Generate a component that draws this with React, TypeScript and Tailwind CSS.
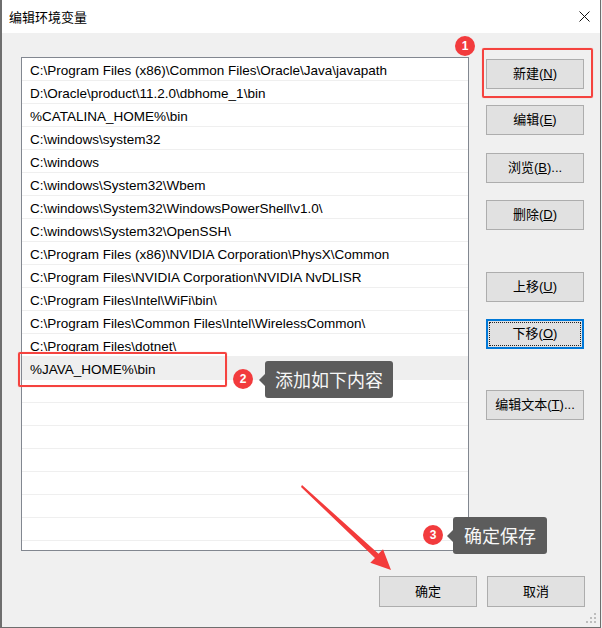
import React from "react";

const rows = [
  "C:\\Program Files (x86)\\Common Files\\Oracle\\Java\\javapath",
  "D:\\Oracle\\product\\11.2.0\\dbhome_1\\bin",
  "%CATALINA_HOME%\\bin",
  "C:\\windows\\system32",
  "C:\\windows",
  "C:\\windows\\System32\\Wbem",
  "C:\\windows\\System32\\WindowsPowerShell\\v1.0\\",
  "C:\\windows\\System32\\OpenSSH\\",
  "C:\\Program Files (x86)\\NVIDIA Corporation\\PhysX\\Common",
  "C:\\Program Files\\NVIDIA Corporation\\NVIDIA NvDLISR",
  "C:\\Program Files\\Intel\\WiFi\\bin\\",
  "C:\\Program Files\\Common Files\\Intel\\WirelessCommon\\",
  "C:\\Program Files\\dotnet\\",
  "%JAVA_HOME%\\bin",
  "",
  "",
  "",
  "",
  "",
  "",
  "",
  "",
];

function Btn({
  label,
  m,
  after = "",
  className = "",
  focused = false,
}: {
  label: string;
  m: string;
  after?: string;
  className?: string;
  focused?: boolean;
}) {
  return (
    <div
      className={`relative w-[98px] h-[30px] flex items-center justify-center bg-[#e1e1e1] text-[13px] text-black ${
        focused ? "border-2 border-[#0078d7]" : "border border-[#adadad]"
      } ${className}`}
    >
      {focused && (
        <div className="absolute inset-[1px] border border-dotted border-[#222]" />
      )}
      <span>
        {label}(<span className="underline">{m}</span>){after}
      </span>
    </div>
  );
}

function Badge({ n, left, top }: { n: string; left: string; top: string }) {
  return (
    <div
      className={`absolute ${left} ${top} w-[20px] h-[20px] rounded-full bg-[#f23b3d] text-white text-[12px] font-bold flex items-center justify-center leading-none`}
    >
      {n}
    </div>
  );
}

export default function App() {
  return (
    <div className="relative w-[602px] h-[628px] bg-[#f0f0f0] overflow-hidden font-['Liberation_Sans','Noto_Sans_CJK_SC',sans-serif]">
      <div className="w-[601px] h-[628px] border-l-2 border-r border-b border-[#6e6e6e] flex flex-col">
        {/* Title bar */}
        <div className="h-[33px] bg-white flex items-center justify-between pl-[7px] pr-[10px]">
          <span className="text-[13px] text-black font-['Noto_Sans_CJK_SC',sans-serif]">
            编辑环境变量
          </span>
          <svg width="11" height="11" viewBox="0 0 11 11">
            <path d="M0.5 0.5 L10.5 10.5 M10.5 0.5 L0.5 10.5" stroke="#111" strokeWidth="1" />
          </svg>
        </div>
        {/* Body */}
        <div className="flex-1 bg-[#f0f0f0] flex flex-col">
          <div className="flex items-start">
            <div className="ml-[19px] mt-[24px] w-[448px] h-[494px] border border-[#828790] bg-white overflow-hidden">
              {rows.map((r, i) => (
                <div
                  key={i}
                  className={`h-[23px] border-b border-[#efefef] pl-[8px] pt-[2px] text-[13.5px] leading-[22px] text-black whitespace-nowrap ${
                    i === 13 ? "bg-[#efefef]" : ""
                  }`}
                >
                  {r}
                </div>
              ))}
            </div>
            <div className="ml-[17px] mt-[26px] flex flex-col">
              <Btn label="新建" m="N" />
              <Btn label="编辑" m="E" className="mt-[16px]" />
              <Btn label="浏览" m="B" after="..." className="mt-[18px]" />
              <Btn label="删除" m="D" className="mt-[17px]" />
              <Btn label="上移" m="U" className="mt-[42px]" />
              <Btn label="下移" m="O" className="mt-[17px]" focused />
              <Btn label="编辑文本" m="T" after="..." className="mt-[41px]" />
            </div>
          </div>
          <div className="mt-[25px] flex justify-end gap-[10px] pr-[15px]">
            <div className="w-[98px] h-[31px] flex items-center justify-center bg-[#e1e1e1] border border-[#adadad] text-[13px] text-black">
              确定
            </div>
            <div className="w-[98px] h-[31px] flex items-center justify-center bg-[#e1e1e1] border border-[#adadad] text-[13px] text-black">
              取消
            </div>
          </div>
        </div>
      </div>

      {/* resize grip */}
      <svg className="absolute left-[586px] top-[613px]" width="12" height="12" viewBox="0 0 12 12">
        <rect x="8" y="0" width="2" height="2" fill="#bdbdbd" />
        <rect x="4" y="4" width="2" height="2" fill="#bdbdbd" />
        <rect x="8" y="4" width="2" height="2" fill="#bdbdbd" />
        <rect x="0" y="8" width="2" height="2" fill="#bdbdbd" />
        <rect x="4" y="8" width="2" height="2" fill="#bdbdbd" />
        <rect x="8" y="8" width="2" height="2" fill="#bdbdbd" />
      </svg>

      {/* Annotations */}
      <div className="absolute left-[482px] top-[48px] w-[111px] h-[50px] border-2 border-[#f5433f] rounded-[2px] shadow-[0_0_1px_#ff8a87]" />
      <Badge n="1" left="left-[455px]" top="top-[36px]" />

      <div className="absolute left-[18px] top-[352px] w-[209px] h-[35px] border-2 border-[#f5433f] rounded-[2px] shadow-[0_0_1px_#ff8a87]" />
      <Badge n="2" left="left-[233px]" top="top-[369px]" />
      <div className="absolute left-[265px] top-[361px] w-[128px] h-[37px] rounded-[3px] bg-[#5c5c5c] flex items-center justify-center text-[18px] text-[#f7f7f7] font-['Noto_Sans_CJK_SC',sans-serif]">
        <div className="absolute left-[-6px] top-[13px] w-0 h-0 border-y-[6px] border-y-transparent border-r-[6px] border-r-[#5c5c5c]" />
        添加如下内容
      </div>

      <Badge n="3" left="left-[423px]" top="top-[525px]" />
      <div className="absolute left-[453px] top-[517px] w-[94px] h-[37px] rounded-[3px] bg-[#5c5c5c] flex items-center justify-center text-[18px] text-[#f7f7f7] font-['Noto_Sans_CJK_SC',sans-serif]">
        <div className="absolute left-[-6px] top-[13px] w-0 h-0 border-y-[6px] border-y-transparent border-r-[6px] border-r-[#5c5c5c]" />
        确定保存
      </div>

      <svg className="absolute left-0 top-0 pointer-events-none" width="602" height="628" viewBox="0 0 602 628">
        <polygon
          points="302,485 378.5,553.8 383,549.3 391,570 370.3,562.7 375,558 301,487"
          fill="#f33b3b"
        />
      </svg>
    </div>
  );
}
